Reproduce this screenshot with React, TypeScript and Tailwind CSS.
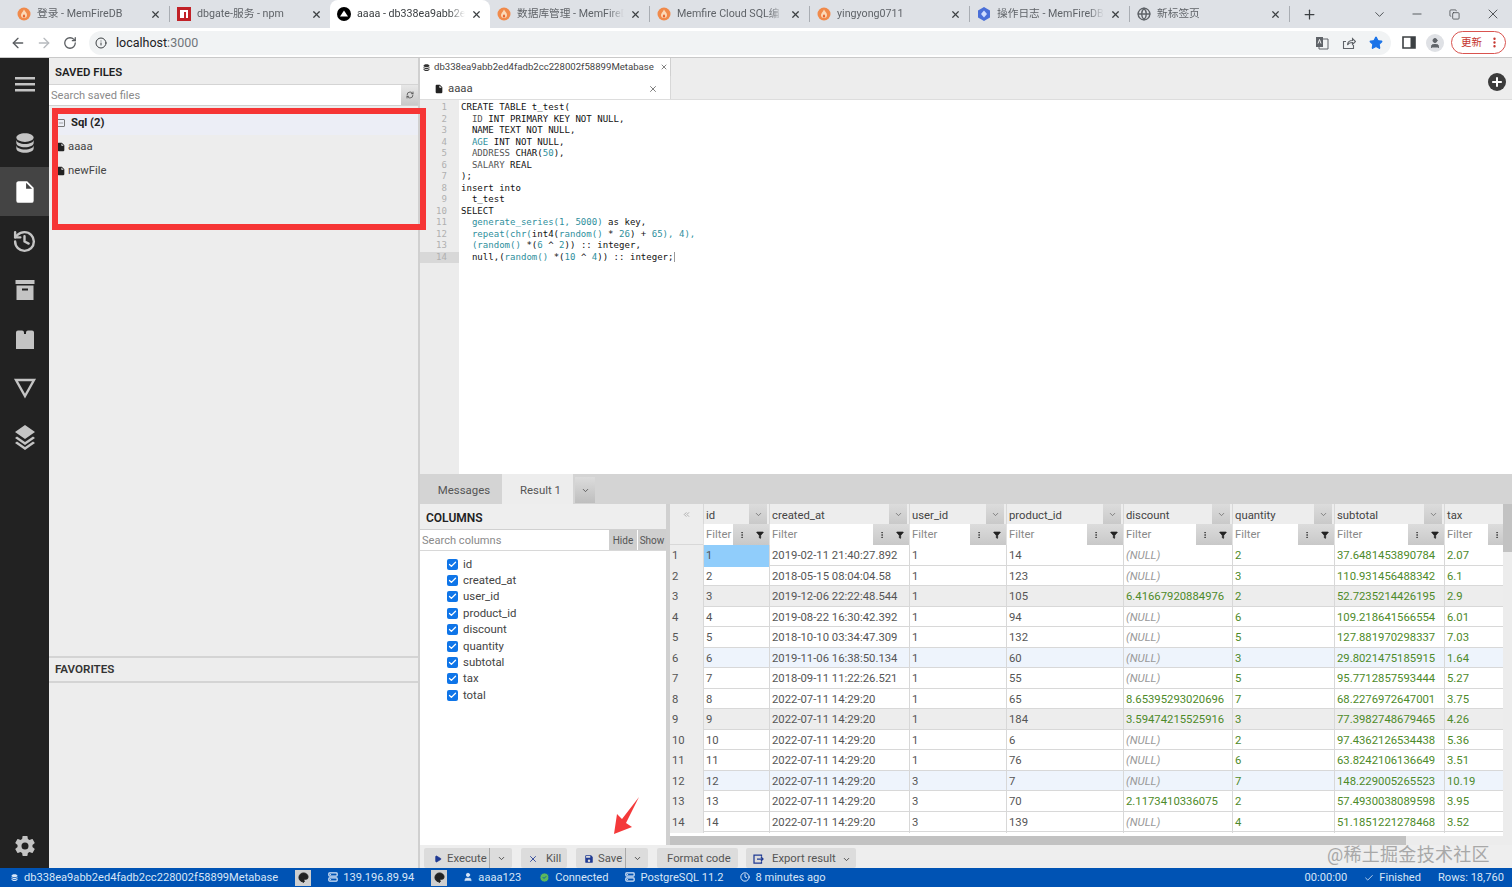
import { ReactNode } from "react";
import { ArrowLeft, ArrowRight, ChevronDown, Info, Minus, Plus, RotateCw, Star, User, X, History, Check, RefreshCw, Filter, EllipsisVertical, Copy, Play, Globe, Palette, Server, CircleCheck, Clock, ChevronsLeft } from "lucide-react";

const tabs = [
    { title: "登录 - MemFireDB", icon: "fire" },
    { title: "dbgate-服务 - npm", icon: "npm", noSep: true },
    { title: "aaaa - db338ea9abb2e", icon: "dbgate", active: true },
    { title: "数据库管理 - MemFireD", icon: "fire" },
    { title: "Memfire Cloud SQL编", icon: "fire" },
    { title: "yingyong0711", icon: "fire" },
    { title: "操作日志 - MemFireDB", icon: "hex" },
    { title: "新标签页", icon: "globe" },
];

const columns = ["id", "created_at", "user_id", "product_id", "discount", "quantity", "subtotal", "tax"];
const checkColumns = [...columns, "total"];

const rows = [
    ["2019-02-11 21:40:27.892", "1", "14", "", "2", "37.6481453890784", "2.07"],
    ["2018-05-15 08:04:04.58", "1", "123", "", "3", "110.931456488342", "6.1"],
    ["2019-12-06 22:22:48.544", "1", "105", "6.41667920884976", "2", "52.7235214426195", "2.9"],
    ["2019-08-22 16:30:42.392", "1", "94", "", "6", "109.218641566554", "6.01"],
    ["2018-10-10 03:34:47.309", "1", "132", "", "5", "127.881970298337", "7.03"],
    ["2019-11-06 16:38:50.134", "1", "60", "", "3", "29.8021475185915", "1.64"],
    ["2018-09-11 11:22:26.521", "1", "55", "", "5", "95.7712857593444", "5.27"],
    ["2022-07-11 14:29:20", "1", "65", "8.65395293020696", "7", "68.2276972647001", "3.75"],
    ["2022-07-11 14:29:20", "1", "184", "3.59474215525916", "3", "77.3982748679465", "4.26"],
    ["2022-07-11 14:29:20", "1", "6", "", "2", "97.4362126534438", "5.36"],
    ["2022-07-11 14:29:20", "1", "76", "", "6", "63.8242106136649", "3.51"],
    ["2022-07-11 14:29:20", "3", "7", "", "7", "148.229005265523", "10.19"],
    ["2022-07-11 14:29:20", "3", "70", "2.1173410336075", "2", "57.4930038089598", "3.95"],
    ["2022-07-11 14:29:20", "3", "139", "", "4", "51.1851221278468", "3.52"],
];

const gridCols = "grid grid-cols-[33px_66px_140px_97px_117px_109px_102px_110px_80px] w-[854px]";

function Favicon({ kind }: { kind: string }) {
    if (kind === "npm") {
        return (
            <svg width="14" height="14" viewBox="0 0 14 14" className="shrink-0">
                <rect width="14" height="14" fill="#c12127" />
                <path d="M3 3h8v8H9V5H7v6H3z" fill="#fff" />
            </svg>
        );
    }
    if (kind === "dbgate") {
        return (
            <svg width="14" height="14" viewBox="0 0 14 14" className="shrink-0">
                <circle cx="7" cy="7" r="7" fill="#000" />
                <path d="M7 3.500 11 9.500H3z" fill="#fff" />
            </svg>
        );
    }
    if (kind === "hex") {
        return (
            <svg width="14" height="14" viewBox="0 0 14 14" className="shrink-0">
                <path d="M7 0 13 3.500v7L7 14 1 10.500v-7z" fill="#4a6fd8" />
                <path d="M7 3.500 10 7 7 10.500 4 7z" fill="#cfdcff" />
            </svg>
        );
    }
    if (kind === "globe") {
        return <Globe size={14} strokeWidth={2.4} className="shrink-0 text-[#5f6368]" />;
    }
    return (
        <svg width="14" height="14" viewBox="0 0 14 14" className="shrink-0">
            <circle cx="7" cy="7" r="6.500" fill="#f08a4b" />
            <path d="M7 2.500C8 5 10 5.500 10 8a3 3 0 0 1-6 0C4 6.500 5.500 5.500 7 2.500z" fill="#fbd9b8" />
            <path d="M7 7c.6 1 1.200 1.300 1.200 2.200a1.200 1.200 0 0 1-2.400 0C5.800 8.300 6.500 8 7 7z" fill="#e8622c" />
        </svg>
    );
}

function TabStrip() {
    return (
        <div className="flex h-[28px] items-center bg-[#dee1e6] pl-[10px] text-[10.7px] text-[#5f6368]">
            {tabs.map((tab) => (
                <div
                    key={tab.title}
                    className={`flex h-full w-[160px] shrink-0 items-center gap-[6px] pl-[7px] pr-[8px] ${
                        tab.active
                            ? "rounded-t-lg bg-white text-[#3c4043]"
                            : tab.noSep
                              ? ""
                              : "border-r border-r-[#a9adb3] [border-image:linear-gradient(transparent_25%,#a9adb3_25%,#a9adb3_75%,transparent_75%)_1]"
                    }`}
                >
                    <Favicon kind={tab.icon} />
                    <span className="min-w-0 flex-1 overflow-hidden whitespace-nowrap pt-[1px] [mask-image:linear-gradient(to_right,black_85%,transparent)]">
                        {tab.title}
                    </span>
                    <X size={11} strokeWidth={2.6} className="shrink-0 text-[#3c4043]" />
                </div>
            ))}
            <Plus size={15} strokeWidth={2} className="ml-[12px] text-[#3c4043]" />
            <div className="ml-auto flex items-center pr-[11px] text-[#3c4043]">
                <ChevronDown size={15} strokeWidth={1.4} />
                <Minus size={14} strokeWidth={1.4} className="ml-[23px]" />
                <Copy size={11} strokeWidth={1.6} className="ml-[25px]" />
                <X size={16} strokeWidth={1.3} className="ml-[25px]" />
            </div>
        </div>
    );
}

function Toolbar() {
    return (
        <div className="flex h-[30px] items-center border-b border-[#c9c9c9] bg-white pl-[10px] pr-[6px]">
            <ArrowLeft size={16} className="text-[#5a5d61]" />
            <ArrowRight size={16} className="ml-[10px] text-[#b7babe]" />
            <RotateCw size={14} strokeWidth={2.2} className="ml-[11px] text-[#5a5d61]" />
            <div className="ml-[12px] flex h-[24px] w-[1302px] items-center rounded-full bg-[#f1f3f4] pl-[6px] pr-[8px] text-[12.5px]">
                <Info size={12} className="text-[#3c4043]" />
                <span className="ml-[9px] pt-[1px] text-[#202124]">localhost</span>
                <span className="pt-[1px] text-[#70757a]">:3000</span>
                <div className="ml-auto flex items-center gap-[13px]">
                    <svg width="14" height="14" viewBox="0 0 14 14" className="text-[#5f6368]">
                        <path d="M4 3h9v10H4z" fill="none" stroke="currentColor" />
                        <path d="M1 1h7v10H1z" fill="currentColor" />
                        <path d="M3 7.500 4.500 3.500 6 7.500" fill="none" stroke="#fff" strokeWidth="0.9" />
                    </svg>
                    <svg width="14" height="14" viewBox="0 0 14 14" fill="none" stroke="#5f6368" strokeWidth="1.100">
                        <path d="M11.500 9v3.500h-10v-7H4M5.500 9c0-3 2-4.500 5-4.500V2.500L13.500 5.500 10.500 8.500V6.500C8.500 6.500 6.500 7 5.500 9z" />
                    </svg>
                    <Star size={14} fill="#1a73e8" className="text-[#1a73e8]" />
                </div>
            </div>
            <svg width="14" height="13" viewBox="0 0 14 13" className="ml-[11px] text-[#3c4043]">
                <path d="M1 1h12v11H1z" fill="none" stroke="currentColor" strokeWidth="1.600" />
                <path d="M8.500 1H13v11H8.500z" fill="currentColor" />
            </svg>
            <div className="ml-[10px] flex h-[18px] w-[18px] items-center justify-center rounded-full bg-[#dfe1e5]">
                <User size={12} fill="#5f6368" className="text-[#5f6368]" />
            </div>
            <div className="ml-[7px] flex h-[23px] w-[55px] items-center justify-between rounded-full border border-[#d9534f] pl-[9px] pr-[4px] text-[10.5px] text-[#c5362f]">
                更新
                <EllipsisVertical size={13} strokeWidth={2.4} />
            </div>
        </div>
    );
}

function NavIcon({ children, active }: { children: ReactNode; active?: boolean }) {
    return (
        <div className={`flex h-[49px] items-center justify-center ${active ? "bg-[#444] text-white" : "text-[#c4c4c4]"}`}>
            {children}
        </div>
    );
}

function SideNav() {
    return (
        <div className="flex w-[49px] shrink-0 flex-col bg-[#222] pt-[1px]">
            <NavIcon>
                <svg width="22" height="22" viewBox="0 0 22 22" fill="currentColor">
                    <rect x="1" y="4" width="20" height="2.500" />
                    <rect x="1" y="10" width="20" height="2.500" />
                    <rect x="1" y="16" width="20" height="2.500" />
                </svg>
            </NavIcon>
            <div className="h-[10px]" />
            <NavIcon>
                <svg width="26" height="26" viewBox="0 0 24 24" fill="currentColor">
                    <path d="M12,3C7.58,3 4,4.79 4,7C4,9.21 7.58,11 12,11C16.42,11 20,9.21 20,7C20,4.79 16.42,3 12,3M4,9V12C4,14.21 7.58,16 12,16C16.42,16 20,14.21 20,12V9C20,11.21 16.42,13 12,13C7.58,13 4,11.21 4,9M4,14V17C4,19.21 7.58,21 12,21C16.42,21 20,19.21 20,17V14C20,16.21 16.42,18 12,18C7.58,18 4,16.21 4,14Z" />
                </svg>
            </NavIcon>
            <NavIcon active>
                <svg width="26" height="26" viewBox="0 0 24 24" fill="currentColor" className="mt-[1px]">
                    <path d="M13,9V3.500L18.500,9M6,2C4.890,2 4,2.890 4,4V20A2,2 0 0,0 6,22H18A2,2 0 0,0 20,20V8L14,2H6Z" />
                </svg>
            </NavIcon>
            <NavIcon>
                <History size={25} strokeWidth={2.3} className="mt-[2px]" />
            </NavIcon>
            <NavIcon>
                <svg width="24" height="24" viewBox="0 0 24 24" fill="currentColor" className="mt-[1px]">
                    <path d="M2.500 2h19v4h-19zM3.500 7.500h17V22h-17zM9 10.500v2h6v-2z" fillRule="evenodd" />
                </svg>
            </NavIcon>
            <NavIcon>
                <svg width="24" height="24" viewBox="0 0 24 24" fill="currentColor">
                    <path d="M3 9V5.500a2 2 0 0 1 2-2h4a2 2 0 0 1 2 2V7h2V5.500a2 2 0 0 1 2-2h4a2 2 0 0 1 2 2V9zM3 9h18v13H3z" />
                </svg>
            </NavIcon>
            <NavIcon>
                <svg width="24" height="24" viewBox="0 0 24 24" fill="none" stroke="currentColor" strokeWidth="2.400" className="mt-[1px]">
                    <path d="M3 4h18l-9 16z" />
                </svg>
            </NavIcon>
            <NavIcon>
                <svg width="24" height="26" viewBox="0 0 24 26" fill="currentColor" className="mt-[1px]">
                    <path d="M12 1 22 8 12 15 2 8zM4 12.500l8 5.500 8-5.500 2 1.500-10 7-10-7zM4 17.500l8 5.500 8-5.500 2 1.500-10 7-10-7z" />
                </svg>
            </NavIcon>
            <div className="mt-auto -mb-[2px]">
                <NavIcon>
                    <svg width="24" height="24" viewBox="0 0 24 24" fill="currentColor">
                        <path d="M12,15.500A3.500,3.500 0 0,1 8.500,12A3.500,3.500 0 0,1 12,8.500A3.500,3.500 0 0,1 15.500,12A3.500,3.500 0 0,1 12,15.500M19.430,12.970C19.470,12.650 19.500,12.330 19.500,12C19.500,11.670 19.470,11.340 19.430,11L21.540,9.370C21.730,9.220 21.780,8.950 21.660,8.730L19.660,5.270C19.540,5.050 19.270,4.960 19.050,5.050L16.560,6.050C16.040,5.660 15.500,5.320 14.870,5.070L14.500,2.420C14.460,2.180 14.250,2 14,2H10C9.750,2 9.540,2.180 9.500,2.420L9.130,5.070C8.500,5.320 7.960,5.660 7.440,6.050L4.950,5.050C4.730,4.960 4.460,5.050 4.340,5.270L2.340,8.730C2.210,8.950 2.270,9.220 2.460,9.370L4.570,11C4.530,11.340 4.500,11.670 4.500,12C4.500,12.330 4.530,12.650 4.570,12.970L2.460,14.630C2.270,14.780 2.210,15.050 2.340,15.270L4.340,18.730C4.460,18.950 4.730,19.030 4.950,18.950L7.440,17.940C7.960,18.340 8.500,18.680 9.130,18.930L9.500,21.580C9.540,21.820 9.750,22 10,22H14C14.250,22 14.460,21.820 14.500,21.580L14.870,18.930C15.500,18.670 16.040,18.340 16.560,17.940L19.050,18.950C19.270,19.030 19.540,18.950 19.660,18.730L21.660,15.270C21.780,15.050 21.730,14.780 21.540,14.630L19.430,12.970Z" />
                    </svg>
                </NavIcon>
            </div>
        </div>
    );
}

function FileIcon({ size = 10 }: { size?: number }) {
    return (
        <svg width={size} height={size} viewBox="0 0 24 24" fill="#222" className="shrink-0">
            <path d="M13,9V3.500L18.500,9M6,2C4.890,2 4,2.890 4,4V20A2,2 0 0,0 6,22H18A2,2 0 0,0 20,20V8L14,2H6Z" />
        </svg>
    );
}

function DbIcon({ className }: { className: string }) {
    return (
        <svg width="9" height="9" viewBox="0 0 24 24" fill="currentColor" className={className}>
            <path d="M12,3C7.58,3 4,4.79 4,7C4,9.21 7.58,11 12,11C16.42,11 20,9.21 20,7C20,4.79 16.42,3 12,3M4,9V12C4,14.21 7.58,16 12,16C16.42,16 20,14.21 20,12V9C20,11.21 16.42,13 12,13C7.58,13 4,11.21 4,9M4,14V17C4,19.21 7.58,21 12,21C16.42,21 20,19.21 20,17V14C20,16.21 16.42,18 12,18C7.58,18 4,16.21 4,14Z" />
        </svg>
    );
}

function SavedFiles() {
    return (
        <div className="flex w-[371px] shrink-0 flex-col border-r-2 border-[#d0d0d0] bg-[#ededed] text-[#444]">
            <div className="flex h-[27px] items-center border-b border-[#d4d4d4] pl-[6px] pt-[4px] text-[11.4px] font-semibold text-[#1f1f1f]">
                SAVED FILES
            </div>
            <div className="flex h-[21px] border-b border-[#d0d0d0]">
                <div className="flex flex-1 items-center bg-white pl-[2px] pt-[3px] text-[11.1px] text-[#8a8a8a]">Search saved files</div>
                <div className="flex w-[17px] items-center justify-center bg-gradient-to-b from-[#e8e8e8] to-[#c9c9c9]">
                    <RefreshCw size={8} strokeWidth={2.6} className="text-[#555]" />
                </div>
            </div>
            <div className="h-[550px] pl-[7px] pt-[5px] text-[11.3px]">
                <div className="flex h-[24px] items-center bg-[#eceef6] font-bold text-[#222]">
                    <Minus size={8} className="ml-[1px] mr-[6px] shrink-0 rounded-[1px] border border-[#777] text-[#555]" />
                    Sql (2)
                </div>
                <div className="flex h-[24px] items-center gap-[2px]">
                    <FileIcon />
                    aaaa
                </div>
                <div className="flex h-[24px] items-center gap-[2px]">
                    <FileIcon />
                    newFile
                </div>
            </div>
            <div className="flex h-[27px] items-center border-y-2 border-[#d4d4d4] pl-[6px] text-[11.6px] font-semibold text-[#333]">
                FAVORITES
            </div>
        </div>
    );
}

function Kw({ children }: { children: ReactNode }) {
    return <span className="text-[#111]">{children}</span>;
}

function Fn({ children }: { children: ReactNode }) {
    return <span className="text-[#2f8f9d]">{children}</span>;
}

const codeLines: ReactNode[] = [
    <><Kw>CREATE TABLE t_test(</Kw></>,
    <>  <span className="text-[#555]">ID</span> <Kw>INT PRIMARY KEY NOT NULL,</Kw></>,
    <>  <Kw>NAME TEXT NOT NULL,</Kw></>,
    <>  <Fn>AGE</Fn> <Kw>INT NOT NULL,</Kw></>,
    <>  <span className="text-[#555]">ADDRESS</span> <Kw>CHAR(</Kw><Fn>50</Fn><Kw>),</Kw></>,
    <>  <span className="text-[#555]">SALARY</span> <Kw>REAL</Kw></>,
    <><Kw>);</Kw></>,
    <><Kw>insert into</Kw></>,
    <>  <Kw>t_test</Kw></>,
    <><Kw>SELECT</Kw></>,
    <>  <Fn>generate_series(1, 5000)</Fn> <Kw>as key,</Kw></>,
    <>  <Fn>repeat(chr(</Fn><Kw>int4(</Kw><Fn>random()</Fn> <Kw>*</Kw> <Fn>26</Fn><Kw>)</Kw> <Kw>+</Kw> <Fn>65), 4),</Fn></>,
    <>  <Fn>(random()</Fn> <Kw>*(</Kw><Fn>6</Fn> <Kw>^</Kw> <Fn>2</Fn><Kw>))</Kw> <Kw>:: integer,</Kw></>,
    <>  <Kw>null,(</Kw><Fn>random()</Fn> <Kw>*(</Kw><Fn>10</Fn> <Kw>^</Kw> <Fn>4</Fn><Kw>)) :: integer;</Kw></>,
];

function Editor() {
    return (
        <div className="flex h-[374px] bg-white font-['DejaVu_Sans_Mono',monospace] text-[9.05px] leading-[11.5px]">
            <div className="w-[39px] shrink-0 bg-[#ececec] pt-[2px] text-[#b0b0b0]">
                {codeLines.map((_, i) => (
                    <div key={i} className={`h-[11.5px] pr-[12px] text-right ${i === 13 ? "bg-[#d8d8d8]" : ""}`}>
                        {i + 1}
                    </div>
                ))}
            </div>
            <div className="flex-1 pl-[2px] pt-[2px]">
                {codeLines.map((line, i) => (
                    <div key={i} className="h-[11.5px] whitespace-pre">
                        {line}
                        {i === 13 && <span className="border-r border-[#999]" />}
                    </div>
                ))}
            </div>
        </div>
    );
}

function ColumnsPanel() {
    return (
        <div className="flex w-[246px] shrink-0 flex-col bg-white text-[#444]">
            <div className="flex h-[26px] items-center border-b border-[#d0d0d0] bg-[#eee] pl-[6px] pt-[2px] text-[12px] font-semibold text-[#222]">
                COLUMNS
            </div>
            <div className="flex h-[21px] border-b border-[#d8d8d8] text-[11.1px]">
                <div className="flex flex-1 items-center pl-[2px] pt-[2px] text-[#8a8a8a]">Search columns</div>
                <div className="flex w-[28px] items-center justify-center bg-[#cfcfcf] text-[10px] text-[#555]">Hide</div>
                <div className="ml-[1px] flex w-[28px] items-center justify-center bg-[#cfcfcf] text-[10px] text-[#555]">Show</div>
            </div>
            <div className="flex-1 pl-[27px] pt-[5px] text-[11.4px]">
                {checkColumns.map((name) => (
                    <div key={name} className="flex h-[16.4px] items-center gap-[5px]">
                        <span className="flex h-[11px] w-[11px] items-center justify-center rounded-[2px] bg-[#0f75e8]">
                            <Check size={9} strokeWidth={3.5} className="text-white" />
                        </span>
                        {name}
                    </div>
                ))}
            </div>
        </div>
    );
}

function GridButton({ children, width }: { children: ReactNode; width: string }) {
    return (
        <span className={`flex shrink-0 items-center justify-center bg-gradient-to-b from-[#dcdcdc] to-[#c8c8c8] ${width}`}>
            {children}
        </span>
    );
}

function DataGrid() {
    return (
        <div className="relative min-w-0 flex-1 overflow-hidden bg-white text-[11.3px] text-[#555]">
            <div className="h-[332px] overflow-hidden">
                <div className={`${gridCols} h-[20px] bg-[#ededed] text-[#444]`}>
                    <div className="flex items-center justify-center">
                        <ChevronsLeft size={9} className="text-[#999]" />
                    </div>
                    {columns.map((name) => (
                        <div key={name} className="flex border-l border-[#d8d8d8] pb-[1px] pl-[2px]">
                            <span className="flex-1 self-center pt-[4px]">{name}</span>
                            <GridButton width="w-[18px] mr-[2px]">
                                <ChevronDown size={9} className="text-[#666]" />
                            </GridButton>
                        </div>
                    ))}
                </div>
                <div className={`${gridCols} h-[21px] border-b border-[#d8d8d8] bg-[#ededed]`}>
                    <div />
                    {columns.map((name) => (
                        <div key={name} className="flex min-w-0 border-l border-[#e2e2e2] pb-[1px]">
                            <span className="min-w-0 flex-1 self-stretch overflow-hidden bg-white pl-[2px] leading-[21px] text-[#888]">Filter</span>
                            <GridButton width="w-[18px]">
                                <EllipsisVertical size={8} strokeWidth={3} className="text-[#444]" />
                            </GridButton>
                            <GridButton width="w-[18px]">
                                <Filter size={8} fill="#222" className="text-[#222]" />
                            </GridButton>
                        </div>
                    ))}
                </div>
                {rows.map((row, i) => {
                    const n = i + 1;
                    const bg = n % 6 === 0 ? "bg-[#eef4fc]" : n % 3 === 0 ? "bg-[#ededed]" : "bg-white";
                    return (
                        <div key={n} className={`${gridCols} h-[20.5px] border-b border-[#d8d8d8] ${bg} leading-[21.5px]`}>
                            <div className="bg-[#ededed] pl-[2px]">{n}</div>
                            <div className={`border-l border-[#d8d8d8] pl-[2px] ${n === 1 ? "bg-[#90cdfb]" : ""}`}>{n}</div>
                            <div className="border-l border-[#d8d8d8] pl-[2px]">{row[0]}</div>
                            <div className="border-l border-[#d8d8d8] pl-[2px]">{row[1]}</div>
                            <div className="border-l border-[#d8d8d8] pl-[2px]">{row[2]}</div>
                            <div className={`border-l border-[#d8d8d8] pl-[2px] ${row[3] ? "text-[#4d8a2a]" : "italic text-[#999]"}`}>
                                {row[3] || "(NULL)"}
                            </div>
                            <div className="border-l border-[#d8d8d8] pl-[2px] text-[#4d8a2a]">{row[4]}</div>
                            <div className="border-l border-[#d8d8d8] pl-[2px] text-[#4d8a2a]">{row[5]}</div>
                            <div className="border-l border-[#d8d8d8] pl-[2px] text-[#4d8a2a]">{row[6]}</div>
                        </div>
                    );
                })}
            </div>
            <div className="h-[9px] bg-[#ececec]">
                <div className="h-full w-[736px] bg-[#c2c2c2]" />
            </div>
            <div className="absolute right-0 top-0 h-[332px] w-[9px] bg-[#ececec]">
                <div className="h-[48px] w-full bg-[#c2c2c2]" />
            </div>
        </div>
    );
}

function ToolButton({ children, split, className }: { children: ReactNode; split?: boolean; className: string }) {
    return (
        <div className={`flex h-[20px] items-center whitespace-nowrap rounded-[2px] bg-[#dcdcdc] text-[11.3px] text-[#555] ${className}`}>
            <div className="flex flex-1 items-center pt-[2px]">{children}</div>
            {split && (
                <div className="flex h-full w-[23px] items-center justify-center border-l border-[#aaa]">
                    <ChevronDown size={9} strokeWidth={2.4} className="text-[#444]" />
                </div>
            )}
        </div>
    );
}

function BottomToolbar() {
    return (
        <div className="flex h-[23px] items-end gap-[9px] bg-[#eee] pl-[4px]">
            <ToolButton split className="w-[88px] pl-[10px]">
                <Play size={8} fill="#1f3a93" className="mr-[5px] text-[#1f3a93]" />
                Execute
            </ToolButton>
            <ToolButton className="w-[46px] pl-[7px]">
                <X size={10} className="mr-[8px] text-[#1f3a93]" />
                Kill
            </ToolButton>
            <ToolButton split className="w-[72px] pl-[8px]">
                <svg width="10" height="10" viewBox="0 0 24 24" fill="#1f3a93" className="mr-[4px]">
                    <path d="M15,9H5V5H15M12,19A3,3 0 0,1 9,16A3,3 0 0,1 12,13A3,3 0 0,1 15,16A3,3 0 0,1 12,19M17,3H5C3.89,3 3,3.9 3,5V19A2,2 0 0,0 5,21H19A2,2 0 0,0 21,19V7L17,3Z" />
                </svg>
                Save
            </ToolButton>
            <ToolButton className="w-[81px] pl-[10px]">Format code</ToolButton>
            <ToolButton className="-ml-[1px] w-[110px] pl-[6px]">
                <svg width="12" height="12" viewBox="0 0 24 24" fill="none" stroke="#1f3a93" strokeWidth="2.500" className="mr-[8px] shrink-0">
                    <path d="M19 7V4H4v16h15v-3M10 12h12m-4-4 4 4-4 4" />
                </svg>
                Export result
                <ChevronDown size={9} strokeWidth={2.4} className="ml-[6px] shrink-0 text-[#444]" />
            </ToolButton>
        </div>
    );
}

function MainArea() {
    return (
        <div className="flex min-w-0 flex-1 flex-col bg-[#ededed]">
            <div className="relative flex h-[18px] text-[9.6px] text-[#444]">
                <div className="flex w-[251px] items-center gap-[3px] overflow-hidden whitespace-nowrap border-r border-[#d0d0d0] bg-white pl-[2px]">
                    <DbIcon className="shrink-0 text-[#333]" />
                    <span>db338ea9abb2ed4fadb2cc228002f58899Metabase</span>
                    <X size={8} className="ml-[3px] shrink-0" />
                </div>
            </div>
            <div className="flex h-[24px] border-b border-[#ddd]">
                <div className="flex w-[251px] items-center border-r border-[#d8d8d8] bg-white pl-[14px] pr-[12px] pt-[3px] text-[11.3px] text-[#444]">
                    <FileIcon />
                    <span className="ml-[4px] flex-1">aaaa</span>
                    <X size={10} className="text-[#666]" />
                </div>
            </div>
            <Editor />
            <div className="flex h-[30px] items-end bg-[#d4d4d4] text-[11.4px] text-[#555]">
                <div className="flex h-[30px] w-[82px] items-center justify-center pl-[6px] pt-[3px]">Messages</div>
                <div className="flex h-[30px] w-[71px] items-center justify-center bg-[#ededed] pl-[6px] pt-[3px]">Result 1</div>
                <div className="ml-[2px] mb-[1px] flex h-[26px] w-[20px] items-center justify-center bg-gradient-to-b from-[#dcdcdc] to-[#bebebe]">
                    <ChevronDown size={9} strokeWidth={2.4} className="text-[#555]" />
                </div>
            </div>
            <div className="flex h-[341px] gap-[4px] bg-[#d0d0d0]">
                <ColumnsPanel />
                <DataGrid />
            </div>
            <BottomToolbar />
        </div>
    );
}

function StatusItem({ children, icon }: { children: ReactNode; icon: ReactNode }) {
    return (
        <span className="flex items-center gap-[5px] whitespace-nowrap">
            {icon}
            {children}
        </span>
    );
}

function ThemeBox() {
    return (
        <span className="flex h-[16px] w-[16px] items-center justify-center bg-[#cfcfcf]">
            <Palette size={11} fill="#222" className="text-[#222]" />
        </span>
    );
}

function StatusBar() {
    return (
        <div className="flex h-[19px] items-center bg-[#0053b4] pl-[10px] pr-[8px] text-[11.1px] text-[#d8e6f7]">
            <StatusItem icon={<DbIcon className="text-[#d8e6f7]" />}>
                <span className="pt-[1px]">db338ea9abb2ed4fadb2cc228002f58899Metabase</span>
            </StatusItem>
            <span className="ml-[17px]"><ThemeBox /></span>
            <span className="ml-[17px]">
                <StatusItem icon={<Server size={10} strokeWidth={3} />}><span className="pt-[1px]">139.196.89.94</span></StatusItem>
            </span>
            <span className="ml-[17px]"><ThemeBox /></span>
            <span className="ml-[16px]">
                <StatusItem icon={<User size={10} fill="#d8e6f7" />}><span className="pt-[1px]">aaaa123</span></StatusItem>
            </span>
            <span className="ml-[18px]">
                <StatusItem icon={<CircleCheck size={11} fill="#5cb85c" className="text-[#0053b4]" />}><span className="pt-[1px]">Connected</span></StatusItem>
            </span>
            <span className="ml-[17px]">
                <StatusItem icon={<Server size={10} strokeWidth={3} />}><span className="pt-[1px]">PostgreSQL 11.2</span></StatusItem>
            </span>
            <span className="ml-[17px]">
                <StatusItem icon={<Clock size={10} strokeWidth={2.4} />}><span className="pt-[1px]">8 minutes ago</span></StatusItem>
            </span>
            <div className="ml-auto flex items-center gap-[17px] pt-[1px]">
                <span>00:00:00</span>
                <StatusItem icon={<Check size={10} />}>Finished</StatusItem>
                <span>Rows: 18,760</span>
            </div>
        </div>
    );
}

export default function App() {
    return (
        <div className="relative flex h-[887px] w-[1512px] flex-col overflow-hidden bg-white font-['Roboto','Noto_Sans_CJK_SC',sans-serif]">
            <TabStrip />
            <Toolbar />
            <div className="flex min-h-0 flex-1">
                <SideNav />
                <SavedFiles />
                <MainArea />
            </div>
            <StatusBar />

            {/* annotations on top of the screenshot */}
            <div className="absolute left-[52px] top-[108px] h-[122px] w-[374px] border-[6px] border-[#f63535]" />
            <div className="absolute left-[1488px] top-[73px] flex h-[18px] w-[18px] items-center justify-center rounded-full bg-[#3c3c3c]">
                <Plus size={14} strokeWidth={3.4} className="text-white" />
            </div>
            <svg width="26" height="38" viewBox="0 0 26 38" className="absolute left-[614px] top-[797px]">
                <path d="M25 0 12 26 18 30 0 37 3 17 8 22z" fill="#f4393a" />
            </svg>
            <div className="absolute left-[1327px] top-[841px] text-[18px] tracking-[0.3px] text-[#a8a8a8]">@稀土掘金技术社区</div>
        </div>
    );
}
